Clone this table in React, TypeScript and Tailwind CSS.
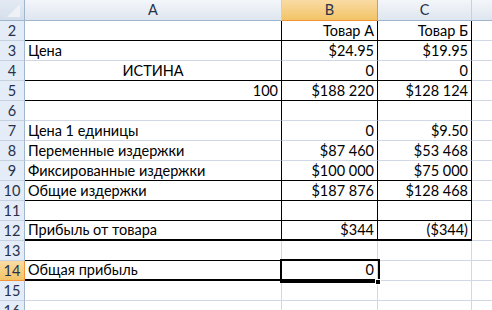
import React from "react";

type B = "g" | "k" | "k2";
type R = "g" | "k";

const bottomCls: Record<B, string> = {
  g: "border-b border-b-[#d0d7e5]",
  k: "border-b border-b-black",
  k2: "border-b-2 border-b-black",
};
const rightCls: Record<R, string> = {
  g: "border-r border-r-[#d0d7e5]",
  k: "border-r border-r-black",
};

type RowDef = {
  n: number;
  a?: string;
  aAlign?: "l" | "c" | "r";
  b?: string;
  c?: string;
  bot: [B, B, B, B];
  rgt: [R, R, R, R];
  sel?: boolean;
};

const G4: [B, B, B, B] = ["g", "g", "g", "g"];
const K3: [B, B, B, B] = ["k", "k", "k", "g"];
const RK: [R, R, R, R] = ["k", "k", "k", "g"];
const RG: [R, R, R, R] = ["g", "g", "g", "g"];

const rows: RowDef[] = [
  { n: 2, b: "Товар А", c: "Товар Б", bot: K3, rgt: RK },
  { n: 3, a: "Цена", b: "$24.95", c: "$19.95", bot: G4, rgt: RK },
  { n: 4, a: "ИСТИНА", aAlign: "c", b: "0", c: "0", bot: K3, rgt: RK },
  { n: 5, a: "100", aAlign: "r", b: "$188 220", c: "$128 124", bot: K3, rgt: RK },
  { n: 6, bot: G4, rgt: RK },
  { n: 7, a: "Цена 1 единицы", b: "0", c: "$9.50", bot: G4, rgt: RK },
  { n: 8, a: "Переменные издержки", b: "$87 460", c: "$53 468", bot: G4, rgt: RK },
  { n: 9, a: "Фиксированные издержки", b: "$100 000", c: "$75 000", bot: K3, rgt: RK },
  { n: 10, a: "Общие издержки", b: "$187 876", c: "$128 468", bot: K3, rgt: RK },
  { n: 11, bot: K3, rgt: RK },
  { n: 12, a: "Прибыль от товара", b: "$344", c: "($344)", bot: ["k2", "k2", "k2", "g"], rgt: RK },
  { n: 13, bot: ["k", "k", "g", "g"], rgt: RG },
  { n: 14, a: "Общая прибыль", b: "0", bot: ["k2", "k2", "g", "g"], rgt: ["k", "g", "g", "g"], sel: true },
  { n: 15, bot: G4, rgt: RG },
  { n: 16, bot: G4, rgt: RG },
];

function Cell({
  text,
  align,
  bot,
  rgt,
}: {
  text?: string;
  align: "l" | "c" | "r";
  bot: B;
  rgt: R;
}) {
  const al =
    align === "l" ? "justify-start pl-[3px]" : align === "c" ? "justify-center" : "justify-end pr-[3px]";
  return (
    <div
      className={`flex items-end ${al} ${bottomCls[bot]} ${rightCls[rgt]} overflow-hidden whitespace-nowrap text-[14.5px] leading-[18px] text-black`}
    >
      {text ?? ""}
    </div>
  );
}

export default function App() {
  return (
    <div className="relative w-[492px] h-[310px] overflow-hidden bg-white font-[Lato,'Open_Sans',sans-serif]">
      <div className="grid w-[592px] grid-cols-[25px_257px_96px_94px_120px] grid-rows-[21px_repeat(15,20px)]">
        {/* corner */}
        <div className="relative border-r border-b border-r-[#9eb6ce] border-b-[#9eb6ce] bg-gradient-to-b from-[#e3eaf3] to-[#d5dfeb]">
          <svg className="absolute inset-0" width="24" height="20" viewBox="0 0 24 20">
            <polygon points="20,4 20,17 7,17" fill="#eef2f7" />
          </svg>
        </div>
        <div className="flex items-center justify-center border-r border-b border-r-[#c5d1de] border-b-[#9eb6ce] bg-gradient-to-b from-[#f3f6fa] to-[#dfe6ef] text-[14.5px] text-[#27314a]">
          A
        </div>
        <div className="flex items-center justify-center border-r border-b border-r-[#f29436] border-b-[#f29436] bg-gradient-to-b from-[#f9dba3] to-[#f2c466] text-[14.5px] text-[#27314a]">
          B
        </div>
        <div className="flex items-center justify-center border-r border-b border-r-[#c5d1de] border-b-[#9eb6ce] bg-gradient-to-b from-[#f3f6fa] to-[#dfe6ef] text-[14.5px] text-[#27314a]">
          C
        </div>
        <div className="border-r border-b border-r-[#c5d1de] border-b-[#9eb6ce] bg-gradient-to-b from-[#f3f6fa] to-[#dfe6ef]" />

        {rows.map((r) => (
          <React.Fragment key={r.n}>
            <div
              className={`flex items-center justify-center border-r border-b text-[14.5px] text-[#27314a] ${
                r.sel
                  ? "border-r-[#f29436] border-b-[#f29436] bg-gradient-to-b from-[#f9dba3] to-[#f2c466]"
                  : "border-r-[#9eb6ce] border-b-[#c5d1de] bg-[#e4ecf7]"
              }`}
            >
              {r.n}
            </div>
            <Cell text={r.a} align={r.aAlign ?? "l"} bot={r.bot[0]} rgt={r.rgt[0]} />
            <Cell text={r.b} align="r" bot={r.bot[1]} rgt={r.rgt[1]} />
            <Cell text={r.c} align="r" bot={r.bot[2]} rgt={r.rgt[2]} />
            <Cell align="l" bot={r.bot[3]} rgt={r.rgt[3]} />
          </React.Fragment>
        ))}
      </div>

      {/* selection box on B14 */}
      <div className="absolute left-[280px] top-[259px] w-[100px] h-[24px] border-2 border-black pointer-events-none" />
      {/* fill handle */}
      <div className="absolute left-[375px] top-[279px] w-[6px] h-[6px] bg-black border border-white pointer-events-none" />
    </div>
  );
}
